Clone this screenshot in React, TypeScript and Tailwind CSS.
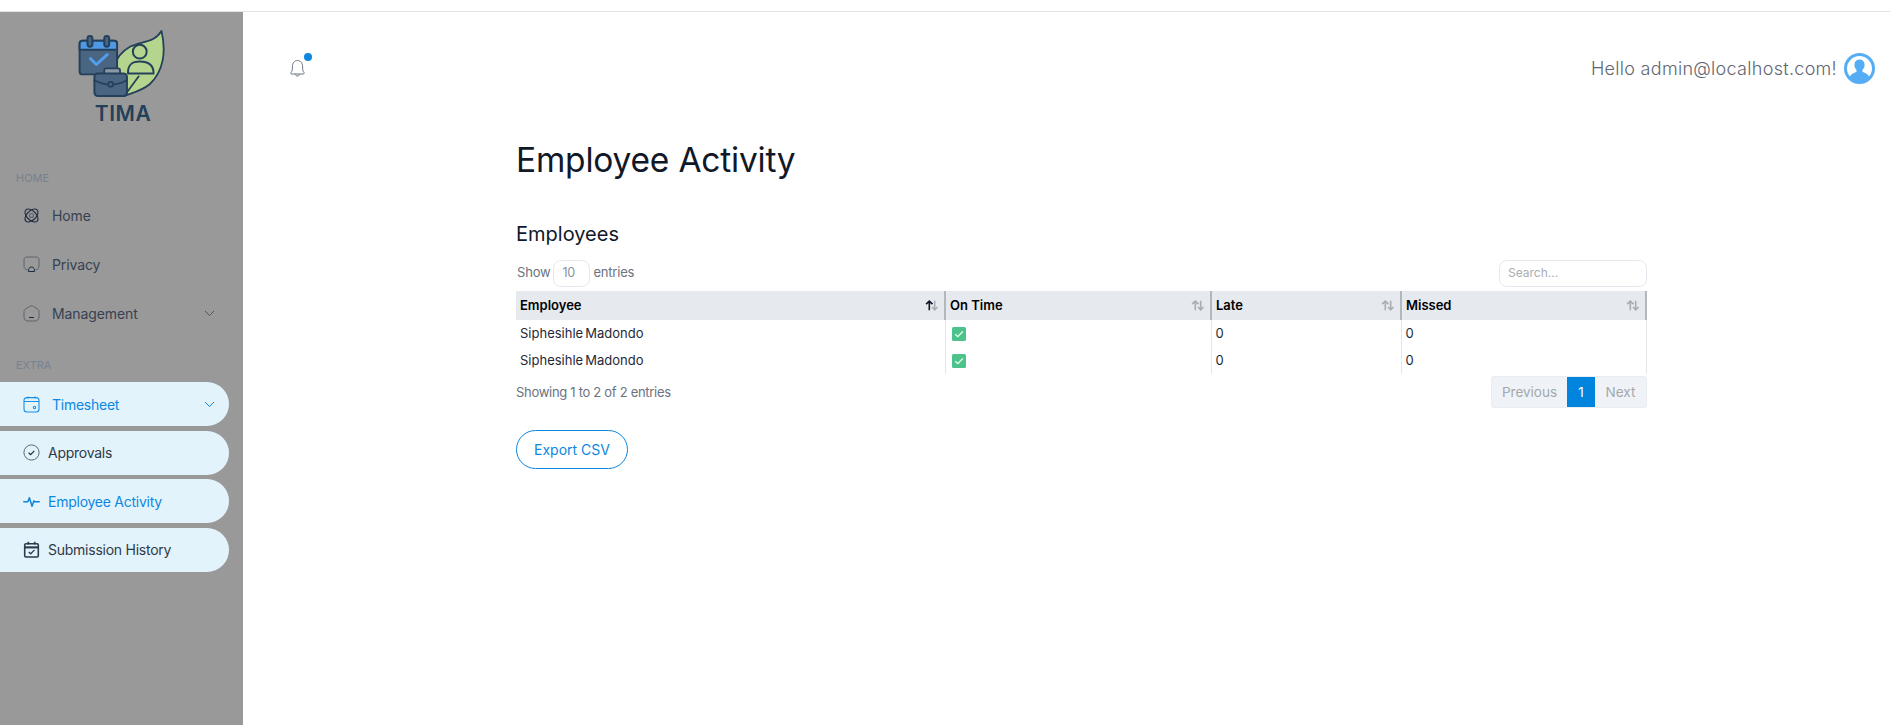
const FONT = "font-['Inter','Noto_Sans',sans-serif]"

function Logo() {
  return (
    <svg width="90" height="71" viewBox="0 0 90 72" fill="none" strokeLinejoin="round" strokeLinecap="round">
      {/* leaf */}
      <path d="M40 65 C28 48 36 26 52 17 C64 11 77 13 84 1 C89 22 86 42 72 55 C62 63 52 64 46 67 Z" fill="#b5d58e" stroke="#24405a" strokeWidth="1.8" />
      <path d="M47 66 L61 47" stroke="#24405a" strokeWidth="1.8" />
      <circle cx="62" cy="22" r="7" stroke="#24405a" strokeWidth="2" />
      <path d="M50 44 C50 35 54 32 62 32 C70 32 76 35 76 44 Z" stroke="#24405a" strokeWidth="2" />
      {/* calendar */}
      <rect x="1" y="11" width="38" height="34" rx="3" fill="#4a6582" stroke="#24405a" strokeWidth="2" />
      <path d="M1 20 V14 a3 3 0 0 1 3-3 H36 a3 3 0 0 1 3 3 V20 Z" fill="#4f99e6" stroke="#24405a" strokeWidth="2" />
      <rect x="9" y="6" width="5" height="11" rx="2.5" fill="#4a6582" stroke="#24405a" strokeWidth="2" />
      <rect x="26" y="6" width="5" height="11" rx="2.5" fill="#4a6582" stroke="#24405a" strokeWidth="2" />
      <path d="M12 29 L18 35 L29 25" stroke="#4f9fea" strokeWidth="3" />
      {/* briefcase */}
      <path d="M26 45 V41 a2 2 0 0 1 2-2 H40 a2 2 0 0 1 2 2 V45" fill="#8b98a5" stroke="#24405a" strokeWidth="1.8" />
      <rect x="16" y="44" width="33" height="23" rx="3.5" fill="#4a6582" stroke="#24405a" strokeWidth="2" />
      <path d="M16 51 C24 55 28 55.5 32.5 55.5 C37 55.5 41 55 49 51" stroke="#24405a" strokeWidth="1.8" />
      <circle cx="32.5" cy="55" r="2.5" fill="#4a6582" stroke="#24405a" strokeWidth="1.8" />
    </svg>
  )
}

function AtomIcon() {
  return (
    <svg className="w-[17px] h-[17px] shrink-0" viewBox="0 0 17 17" fill="none" stroke="#1f2d42" strokeWidth="1.1">
      <circle cx="8.5" cy="8.5" r="2" stroke="#55606e" />
      <ellipse cx="8.5" cy="8.5" rx="8" ry="4.6" transform="rotate(45 8.5 8.5)" />
      <ellipse cx="8.5" cy="8.5" rx="8" ry="4.6" transform="rotate(-45 8.5 8.5)" />
    </svg>
  )
}

function PrivacyIcon() {
  return (
    <svg className="w-[17px] h-[17px] shrink-0" viewBox="0 0 17 17" fill="none" stroke="#3d4654" strokeWidth="1">
      <path d="M4.5 14 C2 13.5 1 12 1 10 V4 C1 2 2 1 4 1 H13 C15 1 16 2 16 4 V10 C16 12 15 13.5 12.5 14" stroke="#5c6470" />
      <path d="M5.5 15.5 C5 13 6.5 11 8.5 11 C10.5 11 12 13 11.5 15.5 Z" stroke="#1f2d42" />
    </svg>
  )
}

function HexIcon() {
  return (
    <svg className="w-[17px] h-[17px] shrink-0" viewBox="0 0 17 17" fill="none" strokeWidth="1">
      <path d="M6.5 1.5 C7.7 0.7 9.3 0.7 10.5 1.5 L14.5 4 C15.5 4.7 16 5.6 16 6.7 V12 C16 14.4 14.4 16 12 16 H5 C2.6 16 1 14.4 1 12 V6.7 C1 5.6 1.5 4.7 2.5 4 Z" stroke="#5c6470" />
      <path d="M6 12.5 H11" stroke="#1f2d42" />
    </svg>
  )
}

function SheetIcon() {
  return (
    <svg className="w-[17px] h-[17px] shrink-0" viewBox="0 0 17 17" fill="none" stroke="#1a8fe6" strokeWidth="1.1">
      <rect x="1" y="1.6" width="15" height="14.4" rx="3" />
      <path d="M1 5.5 H16 M5 0.5 V2.5 M12 0.5 V2.5" />
      <circle cx="11.5" cy="11.5" r="1.2" />
    </svg>
  )
}

function CheckCircleIcon() {
  return (
    <svg className="w-[17px] h-[17px] shrink-0" viewBox="0 0 17 17" fill="none" strokeWidth="1">
      <circle cx="8.5" cy="8.5" r="7.6" stroke="#5c6470" />
      <path d="M5.6 8.8 L7.6 10.6 L11.3 6.8" stroke="#1f2d42" strokeWidth="1.2" />
    </svg>
  )
}

function PulseIcon() {
  return (
    <svg className="w-[17px] h-[17px] shrink-0" viewBox="0 0 16 16" fill="none" stroke="#0d84dc" strokeWidth="1.4" strokeLinejoin="round" strokeLinecap="round">
      <path d="M0.7 8.2 H4.6 L6 4.5 L8.5 12.5 L10.3 7.4 L11 8.2 H15.3" />
    </svg>
  )
}

function CalendarCheckIcon() {
  return (
    <svg className="w-[17px] h-[17px] shrink-0" viewBox="0 0 16 16" fill="none" stroke="#2c3a4b" strokeWidth="1.5">
      <rect x="1.6" y="2.6" width="12.8" height="12.4" rx="1.2" />
      <path d="M1.6 6 H14.4" strokeWidth="2" />
      <path d="M5 0.6 V3.2 M11 0.6 V3.2" />
      <path d="M5.4 10.3 L7.3 12 L10.8 8.4" strokeWidth="1.2" />
    </svg>
  )
}

function Chevron({ color }: { color: string }) {
  return (
    <svg width="11" height="7" viewBox="0 0 11 7" fill="none" stroke={color} strokeWidth="1">
      <path d="M1 1 L5.5 5.5 L10 1" />
    </svg>
  )
}

function SortArrows({ active }: { active?: boolean }) {
  return (
    <svg className="shrink-0" width="14" height="11" viewBox="0 0 13 10" fill="none" strokeWidth="1.5">
      <path d="M4 9.5 V1 M1 3.8 L4 1 L7 3.8" stroke={active ? "#111827" : "#a9adb2"} />
      <path d="M9 0.5 V9 M6.6 6.4 L9 9 L11.6 6.4" stroke="#a9adb2" />
    </svg>
  )
}

function GreenCheck() {
  return (
    <svg className="ml-[2px] block" width="14" height="14" viewBox="0 0 13 13" fill="none">
      <rect width="13" height="13" rx="1.5" fill="#4cc38a" />
      <path d="M3 6.8 L5.4 9 L10 4.2" stroke="#e8fff2" strokeWidth="1.2" />
    </svg>
  )
}

function NavRow({ icon, label, chevron }: { icon: React.ReactNode; label: string; chevron?: boolean }) {
  return (
    <a className="flex items-center h-[49px] pl-[23px] pr-[28px] text-[14px] tracking-[-0.1px] text-[#374151]">
      {icon}
      <span className="ml-[12px] flex-1">{label}</span>
      {chevron && <Chevron color="#4b5563" />}
    </a>
  )
}

function PillRow({ icon, label, active, gap, chevron }: { icon: React.ReactNode; label: string; active?: boolean; gap: string; chevron?: boolean }) {
  return (
    <a className={`flex items-center h-[44px] w-[229px] pl-[23px] pr-[14px] rounded-r-full bg-[#e3f3fc] text-[14px] tracking-[-0.25px] ${active ? "text-[#0d87df]" : "text-[#2f3a49]"}`}>
      {icon}
      <span className={`${gap} flex-1 whitespace-nowrap`}>{label}</span>
      {chevron && <Chevron color="#0d87df" />}
    </a>
  )
}

const rows = [
  { name: "Siphesihle Madondo", late: 0, missed: 0 },
  { name: "Siphesihle Madondo", late: 0, missed: 0 },
]

function Th({ label, active }: { label: string; active?: boolean }) {
  return (
    <th className="h-[29px] p-0 pl-1 pr-[5px] border-r-2 border-[#b3b8bd] text-left font-semibold text-[13px] text-black">
      <div className="flex items-center justify-between">
        {label}
        <SortArrows active={active} />
      </div>
    </th>
  )
}

export default function App() {
  return (
    <div className={`${FONT} h-screen overflow-hidden bg-white flex flex-col`}>
      <div className="h-[12px] shrink-0 border-b border-[#e1e3e6]" />
      <div className="flex flex-1 min-h-0">
        {/* Sidebar */}
        <aside className="w-[243px] shrink-0 bg-[#999999]">
          <div className="flex flex-col items-center pl-[3px] pt-[18px]">
            <Logo />
            <span className="text-[21px] leading-[24px] mt-[1px] font-semibold tracking-[0.5px] text-[#24405a]">TIMA</span>
          </div>
          <p className="mt-[45px] pl-[16px] text-[11px] leading-[14px] text-[#76828f]">HOME</p>
          <nav className="mt-[6px]">
            <NavRow icon={<AtomIcon />} label="Home" />
            <NavRow icon={<PrivacyIcon />} label="Privacy" />
            <NavRow icon={<HexIcon />} label="Management" chevron />
          </nav>
          <p className="mt-[20px] pl-[16px] text-[11px] leading-[14px] text-[#76828f]">EXTRA</p>
          <nav className="mt-[10px] flex flex-col gap-[4.5px]">
            <PillRow icon={<SheetIcon />} label="Timesheet" active gap="ml-[12px]" chevron />
            <PillRow icon={<CheckCircleIcon />} label="Approvals" gap="ml-[8px]" />
            <PillRow icon={<PulseIcon />} label="Employee Activity" active gap="ml-[8px]" />
            <PillRow icon={<CalendarCheckIcon />} label="Submission History" gap="ml-[8px]" />
          </nav>
        </aside>

        {/* Main */}
        <main className="flex-1 min-w-0 relative">
          <div className="flex items-start justify-between pl-[46px] pr-[15px] pt-[41px]">
            <div className="relative mt-[6px]">
              <svg width="17" height="18" viewBox="0 0 17 18" fill="none" stroke="#6b7280" strokeWidth="1">
                <path d="M2 13.5 C3.3 12 3.4 10.5 3.4 8 C3.4 4 5.5 1.5 8.5 1.5 C11.5 1.5 13.6 4 13.6 8 C13.6 10.5 13.7 12 15 13.5 C15.6 14.3 15 15 14 15 H3 C2 15 1.4 14.3 2 13.5 Z" />
                <path d="M6.5 15.2 C6.8 16.6 7.5 17 8.5 17 C9.5 17 10.2 16.6 10.5 15.2" />
              </svg>
              <span className="absolute -top-[6px] left-[15px] w-2 h-2 rounded-full bg-[#0d87df]" />
            </div>
            <div className="flex items-center gap-[7px]">
              <span className="text-[18px] font-light tracking-[0.3px] text-[#5f6672]">Hello admin@localhost.com!</span>
              <svg width="31" height="31" viewBox="0 0 31 31" fill="none">
                <circle cx="15.5" cy="15.5" r="14" fill="#fff" stroke="#55aef5" strokeWidth="3" />
                <path d="M5 26 C6 21 10 20 12.5 18.8 C12.8 17.8 12.5 17 11.6 15.8 C10.6 14.5 10.3 12.8 10.5 11 C10.8 8 12.8 6.4 15.5 6.4 C18.2 6.4 20.2 8 20.5 11 C20.7 12.8 20.4 14.5 19.4 15.8 C18.5 17 18.2 17.8 18.5 18.8 C21 20 25 21 26 26 C23 28.6 19.5 29.5 15.5 29.5 C11.5 29.5 8 28.6 5 26 Z" fill="#55aef5" />
              </svg>
            </div>
          </div>

          <div className="ml-[273px] w-[1131px] mt-[54px]">
            <h1 className="text-[33.5px] leading-[44px] font-normal tracking-[-0.2px] text-[#111827]">Employee Activity</h1>

            <h2 className="mt-[38px] text-[20px] leading-[28px] font-normal text-[#111827]">Employees</h2>

            <div className="mt-[12px] flex items-center justify-between h-[26px]">
              <div className="flex items-center text-[13px] tracking-[-0.2px] text-[#6b7280]">
                <span className="ml-[1px]">Show</span>
                <div className="ml-[3px] mr-[3px] w-[37px] h-[27px] flex items-center pl-[8px] rounded-[8px] border border-[#e5e9ef] text-[12.5px] text-[#8a919c]">10</div>
                <span>entries</span>
              </div>
              <div className="w-[148px] h-[27px] flex items-center pl-[8px] rounded-[8px] border border-[#e5e9ef] text-[12px] text-[#a9adb2]">Search...</div>
            </div>

            <table className="mt-[5px] w-full border-collapse table-fixed">
              <colgroup>
                <col className="w-[429px]" />
                <col className="w-[266px]" />
                <col className="w-[190px]" />
                <col />
              </colgroup>
              <thead className="bg-[#e6eaee]">
                <tr>
                  <Th label="Employee" active />
                  <Th label="On Time" />
                  <Th label="Late" />
                  <Th label="Missed" />
                </tr>
              </thead>
              <tbody className="text-[13px] text-[#1f2937]">
                {rows.map((r, i) => (
                  <tr key={i} className="h-[27px]">
                    <td className="p-0 pl-1 border-r border-[#e3e6ea] [word-spacing:-1.5px]">{r.name}</td>
                    <td className="p-0 pl-1 border-r border-[#e3e6ea]"><GreenCheck /></td>
                    <td className="p-0 pl-1 border-r border-[#e3e6ea]">{r.late}</td>
                    <td className="p-0 pl-1 border-r border-[#e3e6ea]">{r.missed}</td>
                  </tr>
                ))}
              </tbody>
            </table>

            <div className="mt-[2px] flex items-center justify-between">
              <span className="pt-[2px] text-[13px] tracking-[-0.3px] text-[#6b7280]">Showing 1 to 2 of 2 entries</span>
              <div className="flex h-[32px] text-[13.5px] rounded-[3px] border border-[#e8edf2] bg-[#eff3f7] text-[#a3a8ae]">
                <span className="w-[75px] flex items-center justify-center">Previous</span>
                <span className="w-[28px] flex items-center justify-center bg-[#0084dd] text-white">1</span>
                <span className="w-[51px] flex items-center justify-center">Next</span>
              </div>
            </div>

            <button className="mt-[22px] w-[112px] h-[39px] rounded-full border border-[#0d87df] text-[14px] text-[#0d87df]">Export CSV</button>
          </div>
        </main>
      </div>
    </div>
  )
}
